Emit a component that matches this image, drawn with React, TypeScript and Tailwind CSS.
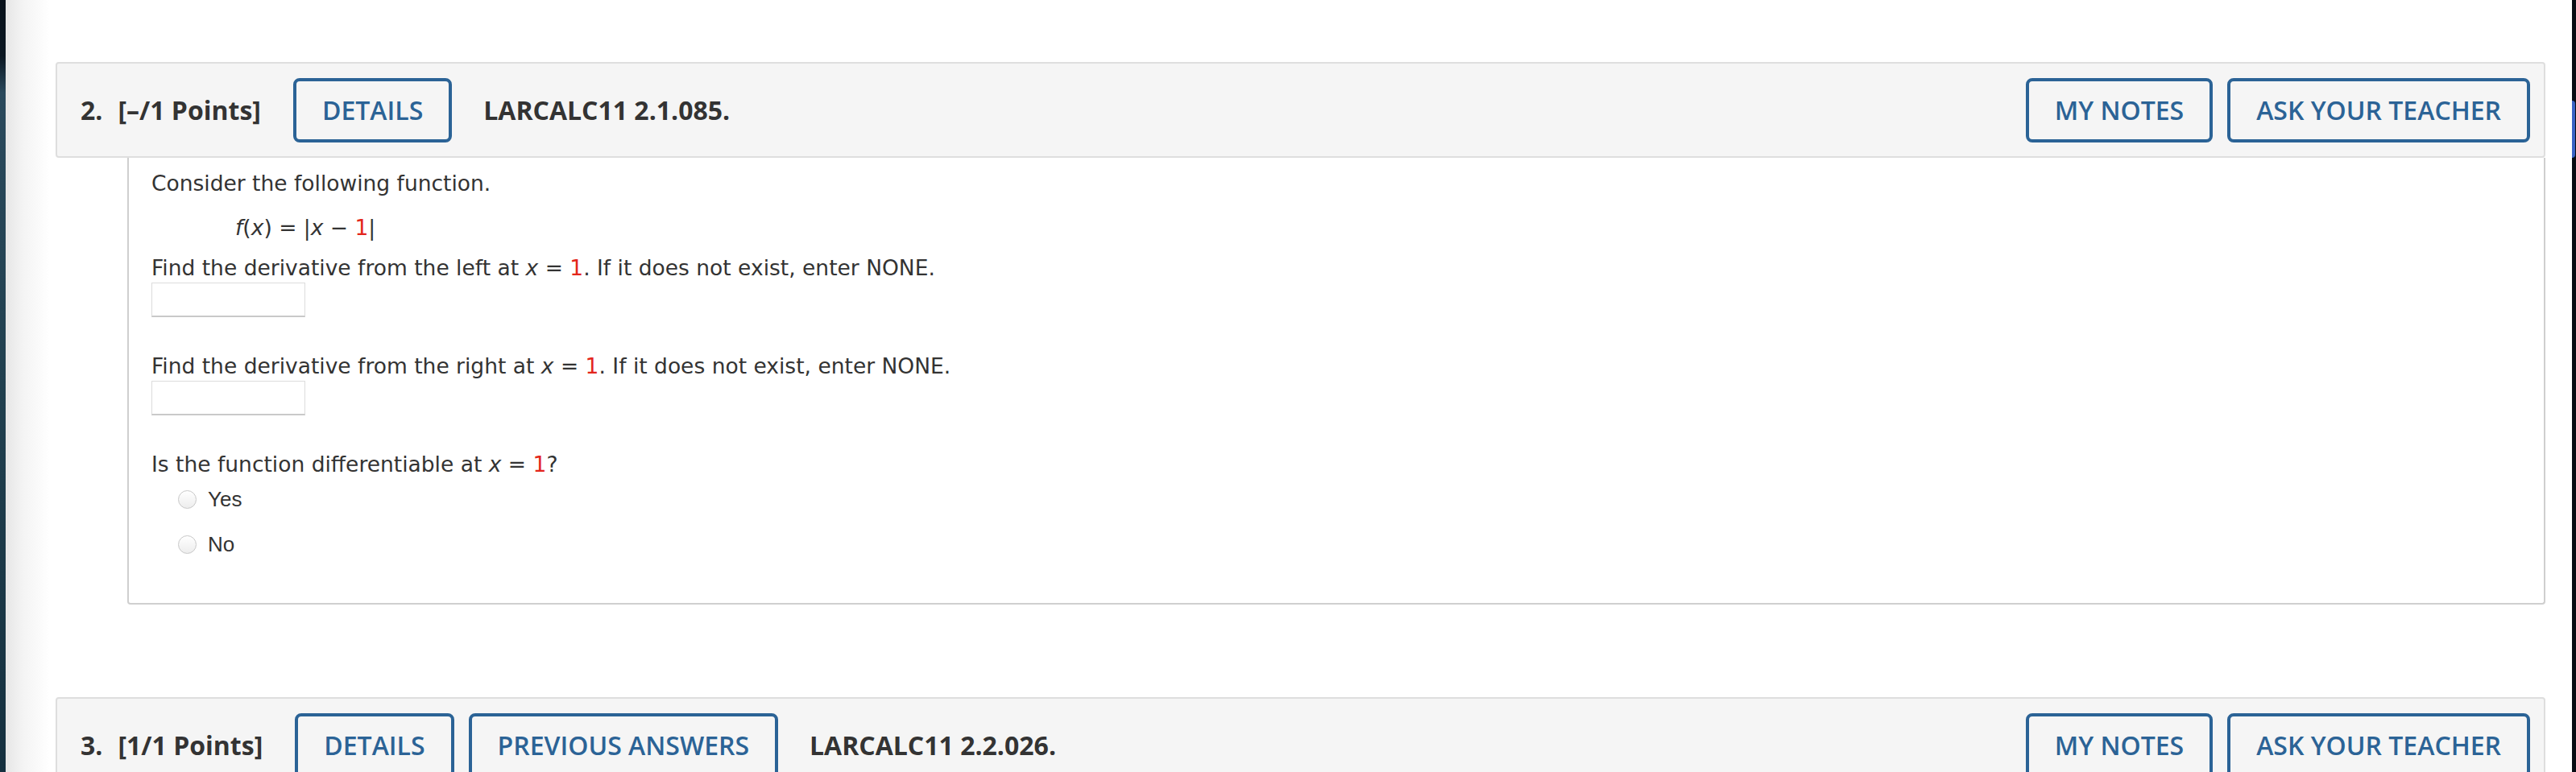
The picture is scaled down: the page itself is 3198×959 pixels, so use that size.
const HEAD_FONT = "font-['Open_Sans',sans-serif]";

function OutlineButton({ label }: { label: string }) {
	return (
		<button
			type="button"
			className={`${HEAD_FONT} h-[80px] shrink-0 rounded-[8px] border-4 border-[#2b6396] bg-[#f5f5f5] px-[32px] text-[32px] font-semibold leading-none text-[#2b6396]`}
		>
			{label}
		</button>
	);
}

function QuestionHeader({
	number,
	points,
	buttons,
	code,
}: {
	number: number;
	points: string;
	buttons: string[];
	code: string;
}) {
	return (
		<div
			className={`${HEAD_FONT} flex h-[119px] shrink-0 items-center rounded-[4px] border-2 border-[#dedede] bg-[#f5f5f5] pl-[29px] pr-[17px] text-[#333]`}
		>
			<span className="text-[32px] font-bold">{number}.</span>
			<span className="ml-[19px] text-[32px] font-bold">{points}</span>
			<div className="ml-[40px] flex gap-[18px]">
				{buttons.map((b) => (
					<OutlineButton key={b} label={b} />
				))}
			</div>
			<span className="ml-[39px] text-[32px] font-bold">{code}</span>
			<div className="ml-auto flex gap-[18px]">
				<OutlineButton label="MY NOTES" />
				<OutlineButton label="ASK YOUR TEACHER" />
			</div>
		</div>
	);
}

function Red({ children }: { children: React.ReactNode }) {
	return <span className="text-[#e3261c]">{children}</span>;
}

function AnswerBox() {
	return (
		<div className="h-[43px] w-[191px] border border-b-2 border-[#dcdcdc] border-b-[#c9c9c9] bg-white" />
	);
}

function RadioRow({ label }: { label: string }) {
	return (
		<label className="ml-[33px] flex h-[36px] items-center gap-[14px]">
			<span className="h-[23px] w-[23px] rounded-full border border-[#c8c8c8] bg-[linear-gradient(#ffffff,#ededed)]" />
			<span className="font-['Liberation_Sans',Arial,sans-serif] text-[26px] text-[#333]">
				{label}
			</span>
		</label>
	);
}

export default function App() {
	return (
		<div className="flex h-[959px] w-[3198px] overflow-hidden bg-white">
			{/* desktop peeking in on the left */}
			<div className="w-[7px] shrink-0 bg-[linear-gradient(to_bottom,#08121b_0px,#0b1722_70px,#2a495c_115px,#21404f_50%,#15303f_100%)]" />

			<div className="flex min-w-0 flex-1 flex-col bg-[linear-gradient(to_right,#e6e6e6,#f4f4f4_22px,#ffffff_55px)] pl-[62px] pr-[33px] pt-[77px]">
				<QuestionHeader
					number={2}
					points="[–/1 Points]"
					buttons={["DETAILS"]}
					code="LARCALC11 2.1.085."
				/>

				<div className="ml-[89px] h-[555px] shrink-0 rounded-b-[4px] border-2 border-t-0 border-[#cfcfcf] bg-white pl-[28px] pt-[14px] font-['DejaVu_Sans',Verdana,sans-serif] text-[26.5px] leading-[36px] text-[#333]">
					<div>Consider the following function.</div>
					<div className="ml-[104px] mt-[19px]">
						<i>f</i>(<i>x</i>) = |<i>x</i> − <Red>1</Red>|
					</div>
					<div className="mt-[14px]">
						Find the derivative from the left at <i>x</i> = <Red>1</Red>. If
						it does not exist, enter NONE.
					</div>
					<AnswerBox />
					<div className="mt-[43px]">
						Find the derivative from the right at <i>x</i> = <Red>1</Red>. If
						it does not exist, enter NONE.
					</div>
					<AnswerBox />
					<div className="mt-[43px]">
						Is the function differentiable at <i>x</i> = <Red>1</Red>?
					</div>
					<div className="mt-[7px]">
						<RadioRow label="Yes" />
					</div>
					<div className="mt-[20px]">
						<RadioRow label="No" />
					</div>
				</div>

				<div className="mt-[115px]">
					<QuestionHeader
						number={3}
						points="[1/1 Points]"
						buttons={["DETAILS", "PREVIOUS ANSWERS"]}
						code="LARCALC11 2.2.026."
					/>
				</div>
			</div>

			{/* right screen edge */}
			<div className="relative w-[5px] shrink-0 bg-[#060b12]">
				<span className="absolute left-0 top-[125px] h-[71px] w-[4px] rounded-r-full bg-[#3a62c4]" />
			</div>
		</div>
	);
}
